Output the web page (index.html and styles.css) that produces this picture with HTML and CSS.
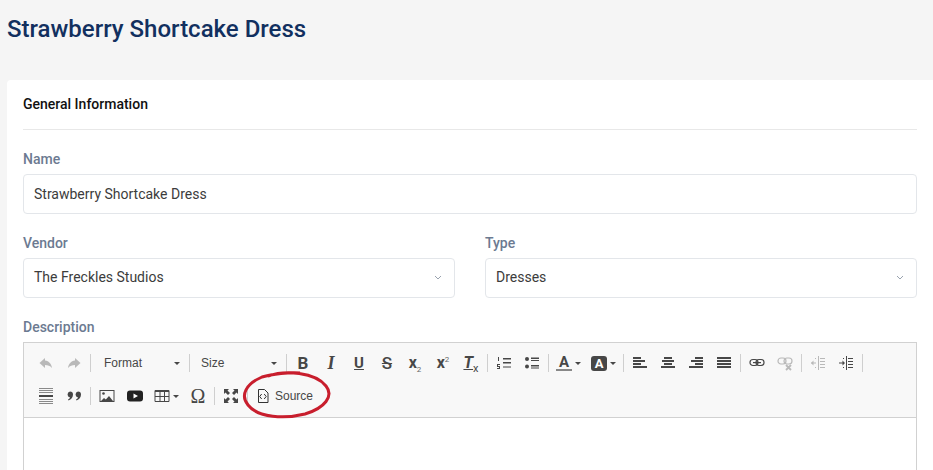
FILE: index.html
```html
<!DOCTYPE html>
<html lang="en">
<head>
  <meta charset="UTF-8">
  <meta name="viewport" content="width=device-width, initial-scale=1.0">
  <title>Strawberry Shortcake Dress</title>
  <link rel="stylesheet" href="styles.css">
</head>
<body>

  <header class="page-header">
    <h1>Strawberry Shortcake Dress</h1>
  </header>

  <div class="card">
    <h2>General Information</h2>

    <label class="field-label first">Name</label>
    <input class="text-input" type="text" value="Strawberry Shortcake Dress">

    <div class="field-row">
      <div>
        <label class="field-label">Vendor</label>
        <div class="select-box">
          <span>The Freckles Studios</span>
          <svg class="chevron" viewBox="0 0 8 5"><path d="M1 1l3 3 3-3" fill="none" stroke="#9aa3af" stroke-width="1"/></svg>
        </div>
      </div>
      <div>
        <label class="field-label">Type</label>
        <div class="select-box">
          <span>Dresses</span>
          <svg class="chevron" viewBox="0 0 8 5"><path d="M1 1l3 3 3-3" fill="none" stroke="#9aa3af" stroke-width="1"/></svg>
        </div>
      </div>
    </div>

    <label class="field-label">Description</label>
    <div class="editor">
      <div class="toolbar">
        <div class="tb-row">
          <span class="btn off"><svg viewBox="0 0 16 16"><path d="M7 3L1.500 8 7 13v-3c3 0 5 .8 7 3-.5-4-3-7-7-7.500z"/></svg></span>
          <span class="btn off"><svg viewBox="0 0 16 16"><path d="M9 3l5.500 5L9 13v-3c-3 0-5 .8-7 3 .5-4 3-7 7-7.500z"/></svg></span>
          <i class="sep"></i>
          <span class="combo format">Format<i class="caret"></i></span>
          <i class="sep"></i>
          <span class="combo size">Size<i class="caret"></i></span>
          <i class="sep"></i>
          <span class="btn glyph bold">B</span>
          <span class="btn glyph italic">I</span>
          <span class="btn glyph under">U</span>
          <span class="btn glyph strike">S</span>
          <span class="btn glyph script"><span>x<sub>2</sub></span></span>
          <span class="btn glyph script"><span>x<sup>2</sup></span></span>
          <span class="btn glyph clear"><span><u>T</u><sub>x</sub></span></span>
          <i class="sep"></i>
          <span class="btn"><svg viewBox="0 0 16 16"><path d="M7 3h8v1.400H7zM7 7h8v1.400H7zM7 11.500h8v1H7z"/><path d="M3 2h1v4H3zM2 9h3v1H3v1h2v3H2v-1h2v-1H2z" transform="translate(-1 0)"/></svg></span>
          <span class="btn"><svg viewBox="0 0 16 16"><circle cx="3" cy="4" r="2"/><circle cx="3" cy="11.500" r="2"/><path d="M7 2.500h8V4H7zM7 5h8v1H7zM7 10h8v1.500H7zM7 12.500h8v1H7z"/></svg></span>
          <i class="sep"></i>
          <span class="btn wide"><span class="color-a">A</span><i class="caret"></i></span>
          <span class="btn wide"><span class="bg-a">A</span><i class="caret"></i></span>
          <i class="sep"></i>
          <span class="btn"><svg viewBox="0 0 16 16"><path d="M1 2h8v2H1zM1 5h12v2H1zM1 8h8v2H1zM1 11h14v2H1z"/></svg></span>
          <span class="btn"><svg viewBox="0 0 16 16"><path d="M4 2h8v2H4zM2 5h12v2H2zM4 8h8v2H4zM1 11h14v2H1z"/></svg></span>
          <span class="btn"><svg viewBox="0 0 16 16"><path d="M7 2h8v2H7zM3 5h12v2H3zM7 8h8v2H7zM1 11h14v2H1z"/></svg></span>
          <span class="btn"><svg viewBox="0 0 16 16"><path d="M1 2h14v2H1zM1 5h14v2H1zM1 8h14v2H1zM1 11h14v2H1z"/></svg></span>
          <i class="sep"></i>
          <span class="btn"><svg viewBox="0 0 16 16"><g fill="none" stroke="#474747" stroke-width="1.200"><rect x="1" y="4.500" width="8" height="6" rx="3"/><rect x="7" y="4.500" width="8" height="6" rx="3"/></g><path d="M4 7h8v1.200H4z"/></svg></span>
          <span class="btn off"><svg viewBox="0 0 16 16"><g fill="none" stroke="#474747" stroke-width="1.200"><rect x="1" y="3" width="8" height="6" rx="3"/><rect x="7" y="3" width="8" height="6" rx="3"/></g><path d="M9 10l5 5M14 10l-5 5" stroke="#474747" stroke-width="1.800"/></svg></span>
          <i class="sep"></i>
          <span class="btn off"><svg viewBox="0 0 16 16"><path d="M8 1h1v14H8zM10 3h5v1h-5zM10 6h5v1h-5zM10 9h5v1h-5zM10 12h5v1h-5zM1 7.500h5v1H1z"/><path d="M3.500 5.500v5L1 8zM5 3h1v1H5zM5 12h1v1H5z"/></svg></span>
          <span class="btn"><svg viewBox="0 0 16 16"><path d="M8 1h1v14H8zM10 3h5v1h-5zM10 6h5v1h-5zM10 9h5v1h-5zM10 12h5v1h-5zM1 7.500h4v1H1z"/><path d="M4.500 5.500v5L7 8zM5 3h1v1H5zM5 12h1v1H5z"/></svg></span>
          <i class="sep"></i>
        </div>
        <div class="tb-row">
          <span class="btn"><svg viewBox="0 0 16 16"><path class="light" d="M1 0h14v1H1zM1 2h14v1H1zM1 4h14v1H1zM1 11h14v1H1zM1 13h14v1H1zM1 15h14v1H1z"/><path d="M1 7h14v2H1z"/></svg></span>
          <span class="btn"><svg viewBox="0 0 16 16"><path d="M4 3.500a3 3 0 0 1 3 3c0 2.800-1.800 5-4.500 6l-.5-1c1.300-.7 1.900-1.500 2-2.100A3 3 0 0 1 4 3.500z"/><path d="M12 3.500a3 3 0 0 1 3 3c0 2.800-1.800 5-4.500 6l-.5-1c1.300-.7 1.900-1.500 2-2.100a3 3 0 0 1 0-5.900z"/></svg></span>
          <i class="sep"></i>
          <span class="btn"><svg viewBox="0 0 16 16"><rect x="1" y="2.500" width="14" height="11" fill="none" stroke="#474747"/><circle cx="4.500" cy="5.500" r="1.300"/><path d="M2 13l3-3 1.800 1.500 3.200-3.500 4 5z"/></svg></span>
          <span class="btn"><svg viewBox="0 0 16 16"><rect x="0" y="2.500" width="16" height="11" rx="3" fill="#222"/><path d="M6.500 5.500v5L11 8z" fill="#fff"/></svg></span>
          <span class="btn wide"><svg viewBox="0 0 16 16"><path d="M1 2.500h14v11H1z" fill="none" stroke="#474747"/><path d="M1 2h14v2H1zM5.500 4h1v9h-1zM10 4h1v9h-1zM1 8h14v1H1z"/></svg><i class="caret"></i></span>
          <span class="btn glyph omega">Ω</span>
          <i class="sep"></i>
          <span class="btn"><svg viewBox="0 0 16 16"><path d="M1 1h5L4.500 2.500 7 5 5 7 2.500 4.500 1 6zM15 1v5l-1.500-1.500L11 7 9 5l2.500-2.500L10 1zM1 15v-5l1.500 1.500L5 9l2 2-2.500 2.500L6 15zM15 15h-5l1.500-1.500L9 11l2-2 2.500 2.500L15 10z"/></svg></span>
          <i class="sep"></i>
          <span class="source">
            <svg viewBox="0 0 14 16"><path d="M2.500 1.500h6l3.500 3.500v9.500h-9.500z" fill="none" stroke="#333"/><path d="M6 7L4 9.500 6 12M8.500 7l2 2.500-2 2.500" fill="none" stroke="#333" transform="translate(-.300 -1)"/></svg>
            Source
          </span>
        </div>
      </div>
      <div class="editor-body"></div>

      <svg class="red-circle" viewBox="0 0 95 50"><path d="M28 6C45 0 75 2 86 16C94 26 85 38 65 44C45 49 18 48 8 35C0 25 6 14 22 7C32 4 50 2 60 3"/></svg>
    </div>
  </div>

</body>
</html>
```

FILE: styles.css
```css
html, body {
  height: 470px;
  overflow: hidden;
}

body {
  font-family: Roboto, Arial, sans-serif;
  margin: 0;
  padding: 0;
  background-color: #f5f5f5;
}

.page-header {
  height: 80px;
  box-sizing: border-box;
  padding: 13px 7px 0;
}

.page-header h1 {
  margin: 0;
  font-size: 24px;
  line-height: 32px;
  font-weight: 500;
  color: #12305f;
}

.card {
  margin-left: 7px;
  padding: 16px;
  background-color: white;
  border-radius: 4px 0 0 0;
}

.card h2 {
  margin: 0;
  padding-bottom: 17px;
  font-size: 14px;
  line-height: 16px;
  font-weight: 500;
  color: #111;
  border-bottom: 1px solid #e8e8e8;
}

.field-label {
  display: block;
  margin: 21px 0 7px;
  font-size: 14px;
  line-height: 16px;
  font-weight: 500;
  color: #6c7a91;
}

.text-input,
.select-box {
  width: 100%;
  height: 40px;
  box-sizing: border-box;
  padding: 0 10px;
  font-family: inherit;
  font-size: 14px;
  color: #3c3c3c;
  border: 1px solid #e3e6ea;
  border-radius: 4px;
  background-color: white;
}

.select-box {
  display: flex;
  align-items: center;
  justify-content: space-between;
  padding-right: 12px;
  padding-bottom: 2px;
}

.chevron {
  width: 8px;
  height: 5px;
}

.field-row {
  display: grid;
  grid-template-columns: 1fr 1fr;
  gap: 30px;
}

.editor {
  position: relative;
  border: 1px solid #d1d1d1;
}

.toolbar {
  padding: 2px 0 4px;
  background-color: #f8f8f8;
  border-bottom: 1px solid #d1d1d1;
  color: #474747;
}

.tb-row {
  display: flex;
  align-items: center;
  box-sizing: border-box;
  height: 34px;
  padding-left: 8px;
}

.tb-row:first-child {
  padding-top: 2px;
}

.btn {
  display: flex;
  align-items: center;
  justify-content: center;
  flex: none;
  width: 28px;
  height: 24px;
}

.btn svg {
  width: 16px;
  height: 16px;
  fill: #474747;
}

.btn svg .light {
  fill: #8a8a8a;
}

.btn.off {
  opacity: 0.35;
}

.btn.wide {
  width: 35px;
  gap: 3px;
  justify-content: flex-start;
  padding-left: 5px;
  box-sizing: border-box;
}

.sep {
  flex: none;
  width: 1px;
  height: 18px;
  margin: 0 2px;
  background-color: #cfcfcf;
}

.combo {
  display: flex;
  align-items: center;
  justify-content: space-between;
  flex: none;
  box-sizing: border-box;
  height: 24px;
  padding-right: 7px;
  font-family: "Liberation Sans", Arial, sans-serif;
  font-size: 12px;
}

.combo.format {
  width: 94px;
  padding-left: 11px;
}

.combo.size {
  width: 92px;
  padding-left: 9px;
}

.caret {
  flex: none;
  width: 0;
  height: 0;
  border-left: 3px solid transparent;
  border-right: 3px solid transparent;
  border-top: 3px solid #474747;
}

.glyph {
  font-size: 16px;
  font-weight: 700;
  line-height: 1;
}

.bold {
  font-size: 17px;
}

.italic {
  font-family: "Liberation Serif", serif;
  font-style: italic;
  font-size: 18px;
}

.under {
  text-decoration: underline;
  font-size: 15px;
}

.strike {
  text-decoration: line-through;
  font-size: 17px;
  font-weight: 500;
}

.script {
  font-size: 16px;
}

.script sub,
.script sup {
  font-size: 8px;
  font-weight: 400;
  line-height: 0;
  color: #666;
}

.clear {
  font-style: italic;
}

.clear sub {
  font-style: normal;
  font-size: 11px;
  font-weight: 400;
  line-height: 0;
}

.omega {
  font-family: "Liberation Serif", serif;
  font-size: 20px;
  font-weight: 400;
}

.color-a {
  width: 16px;
  font-size: 15px;
  font-weight: 700;
  line-height: 14px;
  text-align: center;
  border-bottom: 2px solid #888;
}

.bg-a {
  width: 16px;
  font-size: 13px;
  font-weight: 700;
  line-height: 15px;
  text-align: center;
  color: white;
  background-color: #474747;
  border-radius: 3px;
}

.source {
  display: flex;
  align-items: center;
  gap: 5px;
  padding-left: 6px;
  font-family: "Liberation Sans", Arial, sans-serif;
  font-size: 12px;
}

.source svg {
  width: 14px;
  height: 16px;
}

.editor-body {
  height: 200px;
  background-color: white;
}

.red-circle {
  position: absolute;
  left: 216px;
  top: 27px;
  width: 95px;
  height: 50px;
  fill: none;
  stroke: #c81e2d;
  stroke-width: 3;
  pointer-events: none;
}
```
